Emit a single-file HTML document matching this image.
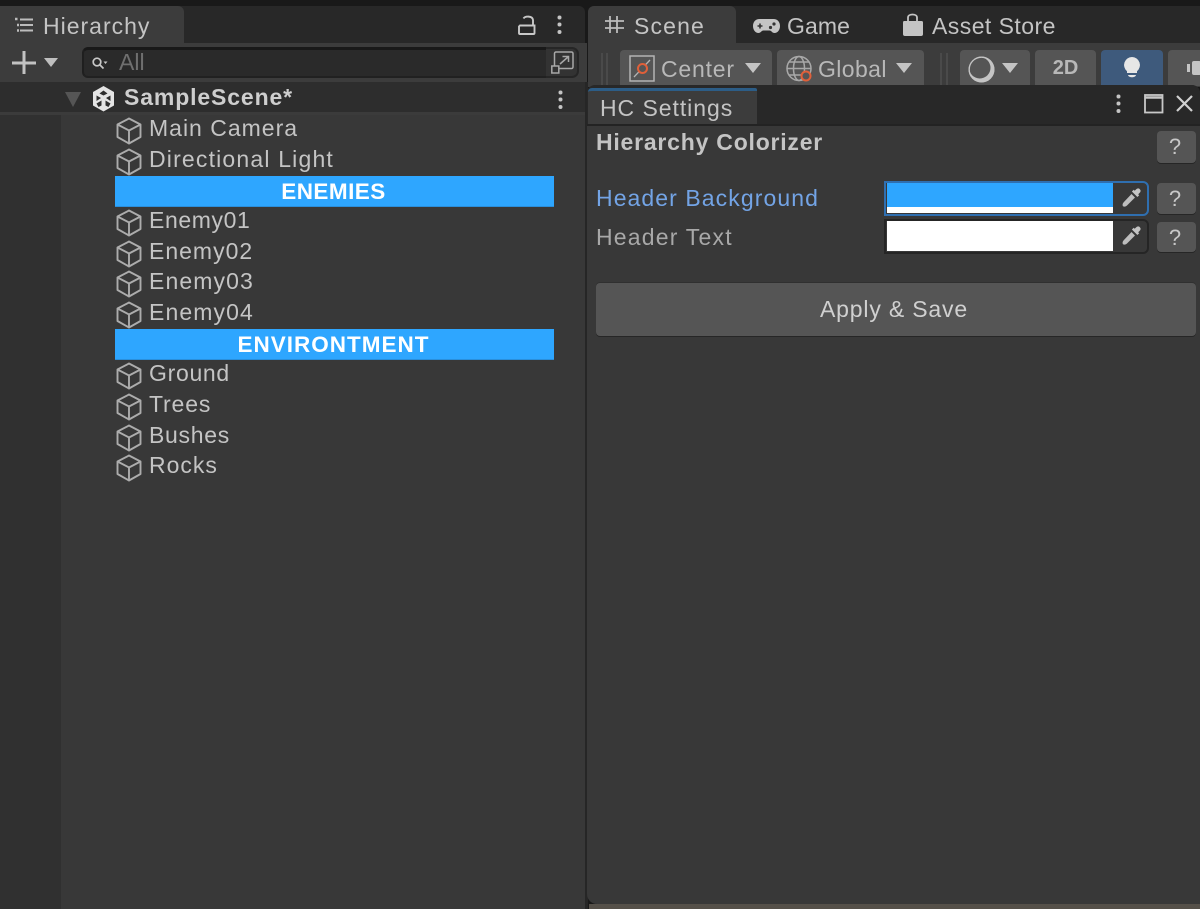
<!DOCTYPE html>
<html><head><meta charset="utf-8">
<style>
html,body{margin:0;padding:0;background:#191919;width:1200px;height:909px;overflow:hidden}
#r{position:relative;width:1200px;height:909px;overflow:hidden;font-family:"Liberation Sans",sans-serif}
.b{position:absolute;box-sizing:border-box}
.t{position:absolute;white-space:nowrap;font-size:23px;line-height:30px;letter-spacing:1px;color:#c4c4c4}
.bold{font-weight:bold}
svg{position:absolute;overflow:visible}
.hd{position:absolute;left:115px;width:439px;height:31px;background:#2ea6ff;color:#fff;font-weight:bold;font-size:22.5px;line-height:32px;text-align:center;border-bottom:1px solid #2a8fdc;box-sizing:border-box;padding-right:2px}
.q{position:absolute;left:1157px;width:39px;height:32px;background:#555;border-radius:4px;box-shadow:0 1px 0 #262626;color:#c8c8c8;text-align:center;font-size:22px;line-height:31px;padding-right:3px;box-sizing:border-box}
.tb{position:absolute;top:50px;height:36px;background:#555;border-radius:4px 4px 0 0}
</style></head><body><div id="r">
<svg width="0" height="0" style="position:absolute"><defs>
<g id="cube" fill="none" stroke="#acacac" stroke-width="1.900" stroke-linejoin="round"><path d="M13 1.500 24.500 7.500V20L13 26.500 1.500 20V7.500Z"/><path d="M1.500 7.500 13 13.500 24.500 7.500M13 13.500V26.500"/></g>
<g id="drop"><path d="M15 2.500c1.500-1.500 3-1.500 4 0 1 1 .8 2.300-.5 3.500l-1.300 1.200 1 1-1.800 1.800-5.500-5.500 1.800-1.800 1 1Z" fill="#c4c4c4"/><path d="M10.500 7 14 10.500 6 18.500c-1.300 1.200-3 1.500-4 .8-.8-1-.5-2.800.7-4Z" fill="#bdbdbd"/></g>
<g id="dots" fill="#c4c4c4"><circle cx="2.500" cy="2.500" r="2"/><circle cx="2.500" cy="9.500" r="2"/><circle cx="2.500" cy="17" r="2"/></g>
</defs></svg>

<!-- LEFT PANEL -->
<div class="b" style="left:0;top:6px;width:585px;height:37px;background:#282828;border-radius:0 6px 0 0"></div>
<div class="b" style="left:0;top:6px;width:184px;height:37px;background:#3c3c3c;border-radius:0 6px 0 0"></div>
<div class="b" style="left:0;top:43px;width:587px;height:39px;background:#3c3c3c"></div>
<svg style="left:14px;top:17px" width="21" height="16" fill="none" stroke="#bcbcbc"><path d="M6 2.500H19M6 8H19M6 13.500H19" stroke-width="2"/><path d="M1 2H3.500M3 8H5M3 13.500H5" stroke-width="2.400"/></svg>
<div class="t" style="left:43px;top:11px;letter-spacing:1px">Hierarchy</div>
<svg style="left:518px;top:15px" width="18" height="20" fill="none" stroke="#c8c8c8" stroke-width="1.900"><path d="M2 10.500H16.500V18a1 1 0 0 1-1 1H2a1 1 0 0 1-1-1V11.500Z"/><path d="M5.500 3.500C7 1 14.500 .5 15 5V10.500"/></svg>
<svg style="left:557px;top:15px" width="5" height="20"><use href="#dots"/></svg>
<svg style="left:12px;top:51px" width="24" height="24" fill="#c2c2c2"><path d="M10.500 0h3v10.500H24v3H13.500V23h-3V13.500H0v-3h10.500Z"/></svg>
<svg style="left:44px;top:58px" width="14" height="9" fill="#bfbfbf"><path d="M0 0H14L7 9Z"/></svg>
<div class="b" style="left:82px;top:47px;width:464px;height:31px;background:#2a2a2a;border-top:3px solid #191919;border-left:2px solid #1f1f1f;border-bottom:2px solid #212121;border-radius:6px 0 0 6px"></div>
<svg style="left:92px;top:57px" width="17" height="13" fill="none" stroke="#c8c8c8" stroke-width="1.700"><circle cx="5" cy="5" r="3.800"/><path d="M8 8 11.500 11.500"/><path d="M11.500 4.500H15.500L13.500 7Z" fill="#c8c8c8" stroke="none"/></svg>
<div class="t" style="left:119px;top:47px;color:#6f6f6f;letter-spacing:0">All</div>
<div class="b" style="left:546px;top:47px;width:33px;height:31px;background:#333;border:2px solid #262626;border-left:0;border-radius:0 7px 7px 0"></div>
<svg style="left:551px;top:51px" width="23" height="23" fill="none" stroke="#a8a8a8" stroke-width="1.500"><path d="M3.500 15V2.500A1.500 1.500 0 0 1 5 1H20.500A1.500 1.500 0 0 1 22 2.500V16A1.500 1.500 0 0 1 20.500 17.500H8"/><path d="M9 13 17 6M11.500 5.500H17.500V11"/><rect x=".8" y="15" width="7" height="7" fill="#333"/></svg>
<div class="b" style="left:0;top:82px;width:585px;height:30px;background:#2d2d2d"></div>
<div class="b" style="left:0;top:112px;width:585px;height:3px;background:#3b3b3b"></div>
<div class="b" style="left:0;top:115px;width:61px;height:794px;background:#303030"></div>
<div class="b" style="left:61px;top:115px;width:524px;height:794px;background:#383838"></div>
<svg style="left:65px;top:92px" width="16" height="16" fill="#555"><path d="M0 0H16L8 15Z"/></svg>
<svg style="left:92px;top:86px" width="23" height="26"><path d="M11.500 0 22 6V19.500L11.500 25.500 1 19.500V6Z" fill="#e4e4e4"/><path d="M11.500 4.500 15.500 7.500 11.500 9.500 7.500 7.500Z" fill="#2d2d2d"/><path d="M4.500 9.500 9 12 4.500 15ZM18.500 9.500 14 12 18.500 15ZM4.500 17.500 9.500 14.500V19.500L6.500 21ZM18.500 17.500 13.500 14.500V19.500L16.500 21Z" fill="#2d2d2d"/></svg>
<div class="t bold" style="left:124px;top:82px;color:#cecece;letter-spacing:.87px">SampleScene*</div>
<svg style="left:558px;top:90px" width="5" height="20"><use href="#dots"/></svg>

<svg style="left:116px;top:117px" width="27" height="28"><use href="#cube"/></svg><div class="t" style="left:149px;top:113px">Main Camera</div>
<svg style="left:116px;top:148px" width="27" height="28"><use href="#cube"/></svg><div class="t" style="left:149px;top:144px;letter-spacing:1.18px">Directional Light</div>
<div class="hd" style="top:176px;letter-spacing:.45px">ENEMIES</div>
<svg style="left:116px;top:209px" width="27" height="28"><use href="#cube"/></svg><div class="t" style="left:149px;top:205px;letter-spacing:.6px">Enemy01</div>
<svg style="left:116px;top:240px" width="27" height="28"><use href="#cube"/></svg><div class="t" style="left:149px;top:236px;letter-spacing:1px">Enemy02</div>
<svg style="left:116px;top:270px" width="27" height="28"><use href="#cube"/></svg><div class="t" style="left:149px;top:266px;letter-spacing:1.1px">Enemy03</div>
<svg style="left:116px;top:301px" width="27" height="28"><use href="#cube"/></svg><div class="t" style="left:149px;top:297px;letter-spacing:1.1px">Enemy04</div>
<div class="hd" style="top:329px;letter-spacing:1px">ENVIRONTMENT</div>
<svg style="left:116px;top:362px" width="27" height="28"><use href="#cube"/></svg><div class="t" style="left:149px;top:358px;letter-spacing:.7px">Ground</div>
<svg style="left:116px;top:393px" width="27" height="28"><use href="#cube"/></svg><div class="t" style="left:149px;top:389px;letter-spacing:.85px">Trees</div>
<svg style="left:116px;top:424px" width="27" height="28"><use href="#cube"/></svg><div class="t" style="left:149px;top:420px;letter-spacing:.7px">Bushes</div>
<svg style="left:116px;top:454px" width="27" height="28"><use href="#cube"/></svg><div class="t" style="left:149px;top:450px">Rocks</div>

<!-- RIGHT PANEL BACK -->
<div class="b" style="left:588px;top:6px;width:612px;height:37px;background:#282828;border-radius:6px 0 0 0"></div>
<div class="b" style="left:588px;top:6px;width:148px;height:37px;background:#3c3c3c;border-radius:6px 6px 0 0"></div>
<div class="b" style="left:588px;top:43px;width:612px;height:44px;background:#3c3c3c"></div>
<svg style="left:604px;top:16px" width="21" height="18" fill="none" stroke="#bcbcbc" stroke-width="1.800"><path d="M6 0V17M13 0V17M1 5H20M1 12H20"/></svg>
<div class="t" style="left:634px;top:11px;letter-spacing:1.15px">Scene</div>
<svg style="left:753px;top:19px" width="28" height="15"><path d="M6.500 0H20.500C24.500 0 27 3 27 7 27 11 24.500 14 21.500 14 19 14 18.500 11.500 16.500 11.500H10.500C8.500 11.500 8 14 5.500 14 2.500 14 0 11 0 7 0 3 2.500 0 6.500 0Z" fill="#c4c4c4"/><path d="M4.500 7H9.500M7 4.500V9.500" stroke="#333" stroke-width="1.600"/><circle cx="17.500" cy="8.500" r="1.600" fill="#333"/><circle cx="21" cy="5" r="1.600" fill="#333"/></svg>
<div class="t" style="left:787px;top:11px;letter-spacing:.1px">Game</div>
<svg style="left:902px;top:13px" width="21" height="24" fill="#c4c4c4"><path d="M1.500 8H19.500a1.500 1.500 0 0 1 1.500 1.500V21a2 2 0 0 1-2 2H3a2 2 0 0 1-2-2V9.500Z"/><path d="M6 9V4.500C6 0.500 15 0.500 15 4.500V9" fill="none" stroke="#c4c4c4" stroke-width="1.800"/></svg>
<div class="t" style="left:932px;top:11px;letter-spacing:.45px">Asset Store</div>

<div class="b" style="left:601px;top:53px;width:2px;height:32px;background:#4a4a4a"></div>
<div class="b" style="left:606px;top:53px;width:2px;height:32px;background:#4a4a4a"></div>
<div class="tb" style="left:620px;width:152px"></div>
<svg style="left:629px;top:55px" width="26" height="27" fill="none"><rect x="1" y="1" width="24" height="25" stroke="#b4b4b4" stroke-width="1.500"/><path d="M5 22 21 5" stroke="#b4b4b4" stroke-width="1.300"/><circle cx="13.500" cy="13.500" r="4.500" stroke="#e0603a" stroke-width="2" fill="#555"/></svg>
<div class="t" style="left:661px;top:54px;color:#b8b8b8;letter-spacing:.8px">Center</div>
<svg style="left:745px;top:63px" width="16" height="11" fill="#c4c4c4"><path d="M0 0H16L8 10Z"/></svg>
<div class="tb" style="left:777px;width:147px"></div>
<svg style="left:786px;top:55px" width="27" height="28" fill="none" stroke="#a8a8a8" stroke-width="1.500"><circle cx="13" cy="13.500" r="12"/><ellipse cx="13" cy="13.500" rx="5.500" ry="12"/><path d="M1 13.500H25M3 7H23M3 20H23"/><circle cx="20" cy="21" r="4.500" stroke="#e0603a" stroke-width="2" fill="#555"/></svg>
<div class="t" style="left:818px;top:54px;color:#b8b8b8;letter-spacing:.4px">Global</div>
<svg style="left:896px;top:63px" width="16" height="11" fill="#c4c4c4"><path d="M0 0H16L8 10Z"/></svg>
<div class="b" style="left:940px;top:53px;width:2px;height:32px;background:#4a4a4a"></div>
<div class="b" style="left:946px;top:53px;width:2px;height:32px;background:#4a4a4a"></div>
<div class="tb" style="left:960px;width:70px"></div>
<svg style="left:968px;top:56px" width="27" height="27"><circle cx="13.500" cy="13.500" r="13" fill="#c4c4c4"/><circle cx="11.800" cy="11.800" r="10.700" fill="#555"/><circle cx="13.500" cy="13.500" r="12.300" fill="none" stroke="#c4c4c4" stroke-width="1.300"/></svg>
<svg style="left:1002px;top:63px" width="16" height="11" fill="#c4c4c4"><path d="M0 0H16L8 10Z"/></svg>
<div class="tb" style="left:1035px;width:61px;text-align:center;color:#b8b8b8;font-weight:bold;font-size:20px;line-height:37px">2D</div>
<div class="tb" style="left:1101px;width:62px;background:#3e5a7c"></div>
<svg style="left:1123px;top:56px" width="18" height="24" fill="#e6e6e6"><path d="M9 1a8 8 0 0 1 5 14.200V17H4v-1.800A8 8 0 0 1 9 1Z"/><path d="M5 19H13C12.500 22 5.500 22 5 19Z"/></svg>
<div class="tb" style="left:1168px;width:40px"></div>
<svg style="left:1187px;top:61px" width="13" height="14" fill="#c4c4c4"><rect x="0" y="3" width="3" height="8"/><rect x="5" y="0" width="9" height="14" rx="2"/></svg>

<!-- FLOATING WINDOW -->
<div class="b" style="left:585px;top:82px;width:3px;height:827px;background:#262626"></div>
<div class="b" style="left:587px;top:85px;width:613px;height:819px;background:#383838;border-radius:8px 8px 0 10px"></div>
<div class="b" style="left:587px;top:85px;width:613px;height:39px;background:#282828;border-radius:8px 8px 0 0"></div>
<div class="b" style="left:587px;top:124px;width:613px;height:2px;background:#232323"></div>
<div class="b" style="left:588px;top:88px;width:169px;height:36px;background:#3c3c3c;border-top:3px solid #2c5d87;border-radius:4px 2px 0 0"></div>
<div class="t" style="left:600px;top:93px;letter-spacing:.95px">HC Settings</div>
<svg style="left:1116px;top:94px" width="5" height="20"><use href="#dots"/></svg>
<svg style="left:1144px;top:94px" width="20" height="20" fill="none" stroke="#c8c8c8"><rect x="1" y="1" width="17.500" height="17.500" stroke-width="1.800"/><path d="M1 3.500H18.500" stroke-width="2.400"/></svg>
<svg style="left:1176px;top:95px" width="17" height="17" stroke="#d0d0d0" stroke-width="2.200"><path d="M1 1 16 16M16 1 1 16"/></svg>

<div class="t bold" style="left:596px;top:127px;color:#c4c4c4;letter-spacing:.78px">Hierarchy Colorizer</div>
<div class="q" style="top:131px">?</div>

<div class="t" style="left:596px;top:183px;color:#73a4e6;letter-spacing:1.08px">Header Background</div>
<div class="b" style="left:884px;top:181px;width:265px;height:35px;background:#383838;border:2px solid #2f6fb0;border-radius:0 6px 6px 0"></div>
<div class="b" style="left:887px;top:183px;width:226px;height:24px;background:#2ea6ff"></div>
<div class="b" style="left:887px;top:207px;width:226px;height:6px;background:#fff"></div>
<svg style="left:1121px;top:187px" width="21" height="21"><use href="#drop"/></svg>
<div class="q" style="top:183px;height:31px">?</div>

<div class="t" style="left:596px;top:222px;color:#a8a8a8;letter-spacing:1.2px">Header Text</div>
<div class="b" style="left:884px;top:219px;width:265px;height:35px;background:#383838;border:2px solid #252525;border-radius:0 6px 6px 0"></div>
<div class="b" style="left:887px;top:221px;width:226px;height:30px;background:#fff"></div>
<svg style="left:1121px;top:225px" width="21" height="21"><use href="#drop"/></svg>
<div class="q" style="top:222px;height:30px">?</div>

<div class="b" style="left:596px;top:283px;width:600px;height:53px;background:#555;border-radius:4px;box-shadow:0 1px 0 #262626,0 -1px 0 #303030"></div>
<div class="t" style="left:596px;top:294px;width:596px;text-align:center;color:#d0d0d0;letter-spacing:.83px">Apply &amp; Save</div>

<div class="b" style="left:589px;top:904px;width:611px;height:5px;background:#555049"></div>
</div></body></html>
